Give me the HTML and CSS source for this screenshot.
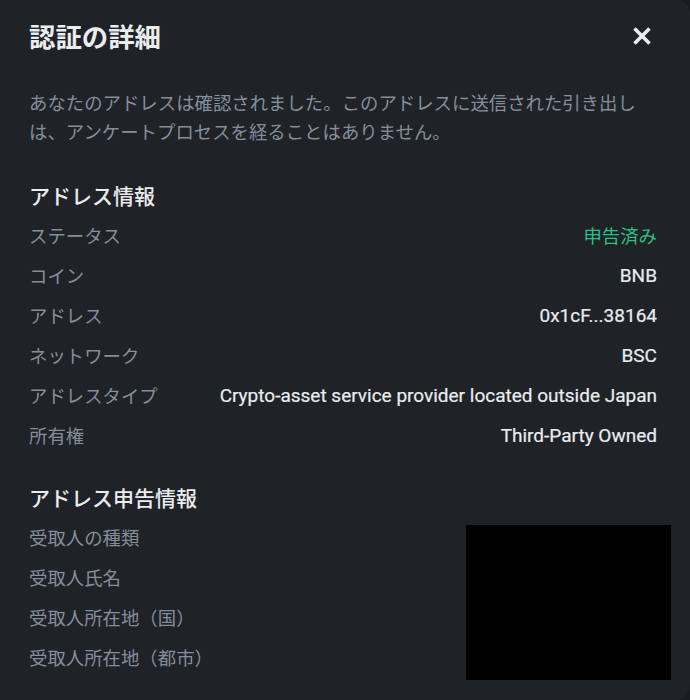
FILE: index.html
```html
<!DOCTYPE html>
<html lang="ja">
<head>
<meta charset="utf-8">
<link rel="stylesheet" href="styles.css">
</head>
<body>
<div class="modal">
  <div class="header">
    <h1 class="title">認証の詳細</h1>
    <button class="close" aria-label="close">
      <svg width="22" height="22" viewBox="0 0 22 22"><path d="M3.5 3.5 L18.5 18.5 M18.5 3.5 L3.5 18.5" stroke="#EAECEF" stroke-width="3.6" stroke-linecap="butt" fill="none"/></svg>
    </button>
  </div>
  <p class="desc">あなたのアドレスは確認されました。このアドレスに送信された引き出しは、アンケートプロセスを経ることはありません。</p>

  <section class="section">
    <h2 class="heading">アドレス情報</h2>
    <div class="row"><span class="label">ステータス</span><span class="value green">申告済み</span></div>
    <div class="row"><span class="label">コイン</span><span class="value">BNB</span></div>
    <div class="row"><span class="label">アドレス</span><span class="value">0x1cF...38164</span></div>
    <div class="row"><span class="label">ネットワーク</span><span class="value">BSC</span></div>
    <div class="row"><span class="label">アドレスタイプ</span><span class="value">Crypto-asset service provider located outside Japan</span></div>
    <div class="row"><span class="label">所有権</span><span class="value">Third-Party Owned</span></div>
  </section>

  <section class="section second">
    <h2 class="heading">アドレス申告情報</h2>
    <div class="row"><span class="label">受取人の種類</span></div>
    <div class="row"><span class="label">受取人氏名</span></div>
    <div class="row"><span class="label">受取人所在地（国）</span></div>
    <div class="row"><span class="label">受取人所在地（都市）</span></div>
    <div class="redact"></div>
  </section>
</div>
</body>
</html>
```

FILE: styles.css
```css
html, body {
  margin: 0;
  padding: 0;
  background: #181b1f;
}
body {
  width: 690px;
  height: 700px;
  overflow: hidden;
  font-family: Roboto, "Noto Sans CJK JP", sans-serif;
}
.modal {
  position: relative;
  box-sizing: border-box;
  width: 690px;
  height: 700px;
  background: #1f2227;
  border-radius: 0 14px 14px 0;
  padding: 20px 33px 0 29px;
}
.header {
  display: flex;
  justify-content: space-between;
  align-items: center;
  height: 32px;
}
.title {
  margin: 0;
  font-family: "Noto Sans CJK JP", sans-serif;
  font-size: 26.4px;
  font-weight: 700;
  line-height: 32px;
  color: #EAECEF;
}
.close {
  background: none;
  border: 0;
  padding: 0;
  margin-right: 4px;
  width: 22px;
  height: 22px;
  display: flex;
}
.desc {
  margin: 36px 0 0;
  font-family: "Noto Sans CJK JP", sans-serif;
  font-size: 18.4px;
  line-height: 29px;
  color: #848E9C;
}
.section {
  margin-top: 34px;
}
.second {
  margin-top: 27px;
}
.heading {
  margin: 0 0 5px;
  font-family: "Noto Sans CJK JP", sans-serif;
  font-size: 21px;
  font-weight: 500;
  line-height: 30px;
  color: #EAECEF;
}
.row {
  display: flex;
  justify-content: space-between;
  align-items: center;
  height: 40px;
}
.label {
  font-family: "Noto Sans CJK JP", sans-serif;
  font-size: 18.4px;
  color: #848E9C;
}
.value {
  font-size: 19px;
  font-weight: 400;
  color: #EAECEF;
  -webkit-text-stroke: 0.2px #EAECEF;
}
.value.green {
  font-family: "Noto Sans CJK JP", sans-serif;
  font-size: 18.4px;
  color: #2EBD85;
  -webkit-text-stroke: 0;
}
.redact {
  position: absolute;
  left: 466px;
  top: 525px;
  width: 205px;
  height: 155px;
  background: #000;
}
```
